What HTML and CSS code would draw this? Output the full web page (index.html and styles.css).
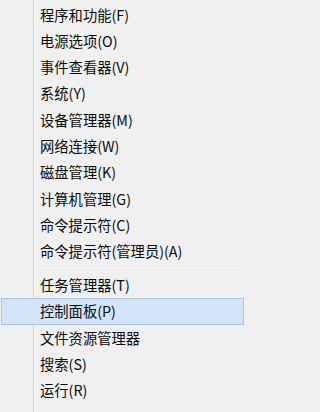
FILE: index.html
```html
<!DOCTYPE html>
<html lang="zh-CN">
<head>
<meta charset="utf-8">
<title>菜单</title>
<link rel="stylesheet" href="styles.css">
</head>
<body>
<div class="menu">
  <div class="item">程序和功能(F)</div>
  <div class="item">电源选项(O)</div>
  <div class="item">事件查看器(V)</div>
  <div class="item">系统(Y)</div>
  <div class="item">设备管理器(M)</div>
  <div class="item">网络连接(W)</div>
  <div class="item">磁盘管理(K)</div>
  <div class="item">计算机管理(G)</div>
  <div class="item">命令提示符(C)</div>
  <div class="item">命令提示符(管理员)(A)</div>
  <div class="separator"></div>
  <div class="item">任务管理器(T)</div>
  <div class="item item-active">控制面板(P)</div>
  <div class="item">文件资源管理器</div>
  <div class="item">搜索(S)</div>
  <div class="item">运行(R)</div>
</div>
</body>
</html>
```
FILE: styles.css
```css
html, body {
  margin: 0;
  padding: 0;
  background: #f0f0f0;
}
body {
  width: 247px;
  height: 412px;
  overflow: hidden;
}
.menu {
  min-height: 412px;
  box-sizing: border-box;
  padding-top: 1.5px;
  font-family: "Noto Sans CJK SC", "Noto Sans", sans-serif;
  font-size: 14.3px;
  color: #0a0a0a;
  background-image: linear-gradient(to right,
    transparent 33px, #d6d6d6 33px, #d6d6d6 34px,
    #fbfbfb 34px, #fbfbfb 35px, transparent 35px);
}
.item {
  height: 26.3px;
  line-height: 26.3px;
  padding-left: 40px;
  white-space: nowrap;
  box-sizing: border-box;
}
.item-active {
  margin: 0 3px 0 1px;
  padding-left: 38px;
  border: 1px solid #a9c4df;
  line-height: 24.3px;
  background: #d2e4f6;
}
.separator {
  height: 7.5px;
  box-sizing: border-box;
  padding-top: 2px;
  margin-left: 36px;
  margin-right: 3px;
}
.separator::before {
  content: "";
  display: block;
  height: 1px;
  background: #e4e4e4;
  border-bottom: 1px solid #fafafa;
}
```
